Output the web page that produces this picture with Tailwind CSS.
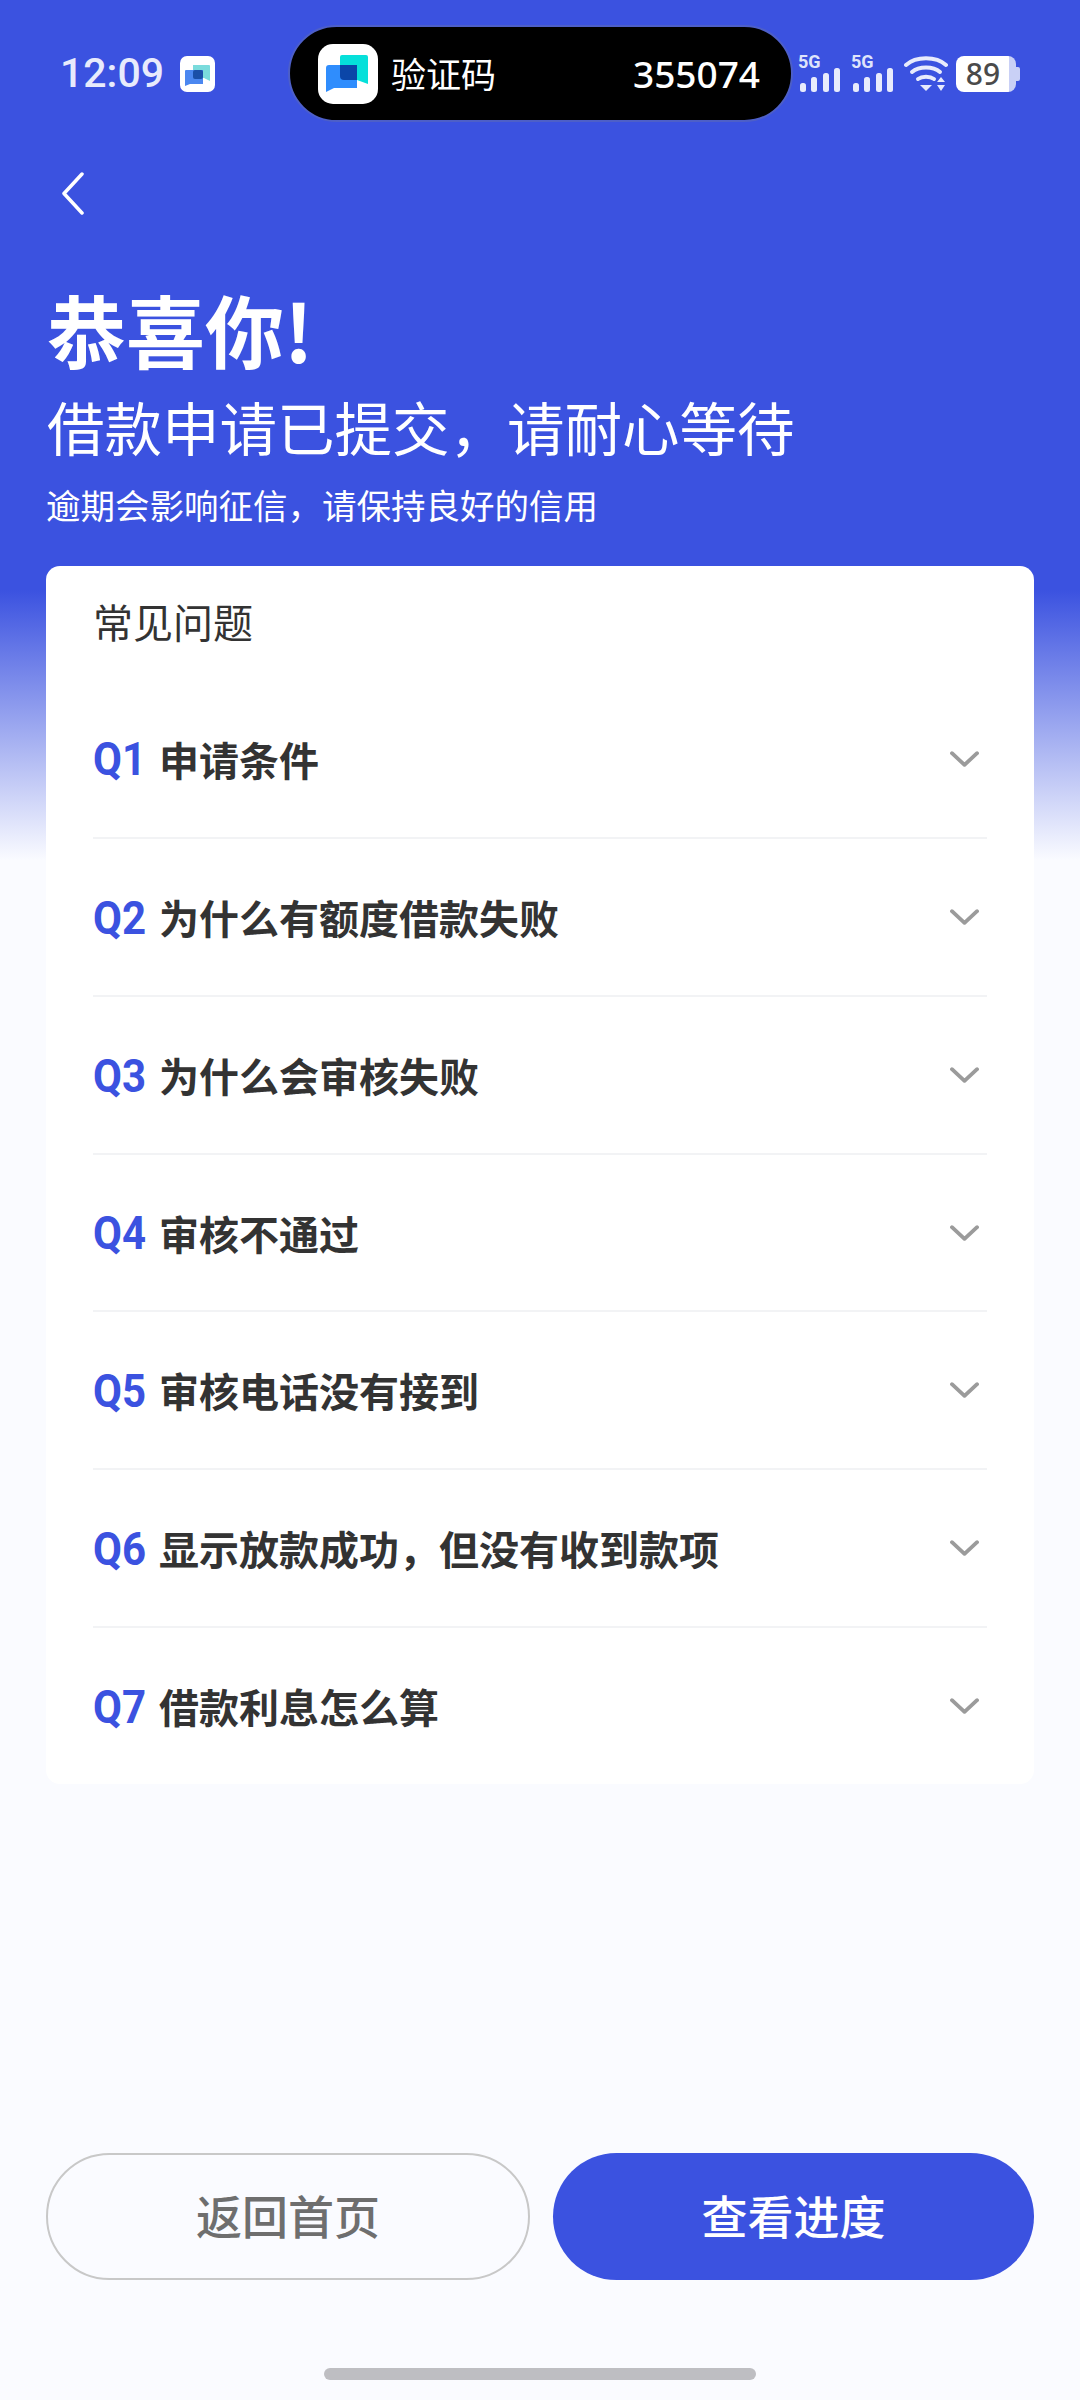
<!DOCTYPE html>
<html lang="zh-CN">
<head>
    <meta charset="UTF-8">
    <meta name="viewport" content="width=device-width, initial-scale=1.0">
    <title>恭喜你</title>
    <script src="https://cdn.jsdelivr.net/npm/@tailwindcss/browser@4"></script>
</head>
<body class="font-['Noto_Sans_CJK_SC',sans-serif]">
<div class="w-[1080px] h-[2400px] flex flex-col bg-[linear-gradient(#3b52e0_0,#3b52e0_590px,#fafbff_860px)]">

    <!-- status bar -->
    <div class="h-[146px] pt-[25px] flex items-start shrink-0">
        <div class="h-[97px] flex items-center ml-[60px] w-[228px] shrink-0">
            <span class="font-['Roboto',sans-serif] font-medium text-[41px] text-[#e8ebfc] w-[120px]">12:09</span>
            <svg class="w-[35px] h-[36px]" viewBox="0 0 35 36">
                <rect width="35" height="36" rx="7" fill="#fff"/>
                <path d="M13 9h16a1 1 0 0 1 1 1v15l-6-3H13z" fill="#7adbdc"/>
                <path d="M6 14h17v14H10l-5 2V15a1 1 0 0 1 1-1z" fill="#4b87f0"/>
                <rect x="13" y="14" width="10" height="9" rx="2" fill="#1a4fa8"/>
            </svg>
        </div>
        <div class="w-[505px] h-[97px] rounded-full bg-black border-2 border-[#4d5fc8] flex items-center shrink-0 pl-[28px] pr-[31px]">
            <svg class="w-[60px] h-[60px] shrink-0" viewBox="0 0 60 60">
                <rect width="60" height="60" rx="15" fill="#fff"/>
                <path d="M24 11h24a2 2 0 0 1 2 2v27l-11-4H22V13a2 2 0 0 1 2-2z" fill="#06e0da"/>
                <path d="M11 21h25a3 3 0 0 1 3 3v20H16l-8 4V24a3 3 0 0 1 3-3z" fill="#2f8dfd"/>
                <path d="M22 21h17v15H26a4 4 0 0 1-4-4z" fill="#0b46a8"/>
            </svg>
            <span class="text-white text-[35px] ml-[13px]">验证码</span>
            <span class="font-['Noto_Sans',sans-serif] font-medium text-white text-[37px] ml-auto">355074</span>
        </div>
        <div class="h-[97px] flex items-center ml-[5px]">
            <div class="w-[44px] h-[36px] relative shrink-0">
                <span class="absolute left-0 top-[-4px] font-['Roboto',sans-serif] font-bold text-[18px] leading-[20px] text-[#dfe4fb]">5G</span>
                <svg class="absolute left-[0px] top-0 w-[44px] h-[36px]" viewBox="0 0 44 36" fill="#e8ebfc">
                    <rect x="2" y="27" width="6" height="9" rx="2.5"/><rect x="13" y="21" width="6" height="15" rx="2.5"/><rect x="25" y="17" width="6" height="19" rx="2.5"/><rect x="36" y="12" width="6" height="24" rx="2.5"/>
                </svg>
            </div>
            <div class="w-[44px] h-[36px] relative shrink-0 ml-[9px]">
                <span class="absolute left-0 top-[-4px] font-['Roboto',sans-serif] font-bold text-[18px] leading-[20px] text-[#dfe4fb]">5G</span>
                <svg class="absolute left-[0px] top-0 w-[44px] h-[36px]" viewBox="0 0 44 36" fill="#e8ebfc">
                    <rect x="2" y="27" width="6" height="9" rx="2.5"/><rect x="13" y="21" width="6" height="15" rx="2.5"/><rect x="25" y="17" width="6" height="19" rx="2.5"/><rect x="36" y="12" width="6" height="24" rx="2.5"/>
                </svg>
            </div>
            <svg class="w-[44px] h-[36px] ml-[9px] shrink-0" viewBox="0 0 44 36" fill="none" stroke="#e8ebfc" stroke-width="4" stroke-linecap="round">
                <path d="M2 9C12 0 32 0 42 9"/>
                <path d="M8 16C15 10 29 10 36 16"/>
                <path d="M14 23C18 20 26 20 30 23"/>
                <path d="M16 29h12l-6 6z" fill="#e8ebfc" stroke="none"/>
                <path d="M33 26l4-5 4 5zM33 29l4 6 4-6z" fill="#e8ebfc" stroke="none"/>
            </svg>
            <div class="ml-[8px] w-[64px] h-[36px] flex items-center shrink-0">
                <div class="w-[60px] h-[36px] rounded-[8px] bg-[linear-gradient(90deg,#fff_0,#fff_88%,#c9d0f6_88%)] flex items-center justify-center pr-[6px] font-['Noto_Sans',sans-serif] font-medium text-[30px] text-[#4a4a4a]">89</div>
                <div class="w-[4px] h-[14px] rounded-r-[2px] bg-[#c9d0f6]"></div>
            </div>
        </div>
    </div>

    <!-- back -->
    <div class="h-[67px] pl-[61px] pt-[26px] shrink-0">
        <svg class="w-[24px] h-[43px]" viewBox="0 0 24 43" fill="none" stroke="#fff" stroke-width="3.5" stroke-linecap="round" stroke-linejoin="round">
            <path d="M21 2L3 21.5L21 41"/>
        </svg>
    </div>

    <!-- heading -->
    <div class="pl-[47px] text-white shrink-0">
        <div class="mt-[71px] h-[90px] leading-[90px] text-[79px] font-bold">恭喜你!</div>
        <div class="mt-[17px] h-[70px] leading-[70px] text-[57.5px]">借款申请已提交，请耐心等待</div>
        <div class="mt-[21px] h-[44px] leading-[44px] text-[34.5px] ml-[-1px]">逾期会影响征信，请保持良好的信用</div>
    </div>

    <!-- faq card -->
    <div class="mx-[46px] mt-[40px] bg-white rounded-[14px] h-[1218px] shrink-0 px-[47px]">
        <div class="h-[114px] pt-[25px] leading-[60px] text-[40px] text-[#333333]">常见问题</div>
        <div class="h-[1104px] flex flex-col">
            <div class="flex items-center h-[159px] border-b-2 border-[#f2f3f5]">
                <span class="inline-block scale-y-[1.12] font-['Roboto',sans-serif] font-bold text-[42px] text-[#3b52e0] w-[66px]">Q1</span>
                <span class="font-bold text-[40px] text-[#333333]">申请条件</span>
                <svg class="ml-auto mr-[8px] w-[29px] h-[18px]" viewBox="0 0 30 18" fill="none" stroke="#9b9b9b" stroke-width="4" stroke-linecap="round" stroke-linejoin="round"><path d="M2 3l13 12L28 3"/></svg>
            </div>
            <div class="flex items-center h-[158px] border-b-2 border-[#f2f3f5]">
                <span class="inline-block scale-y-[1.12] font-['Roboto',sans-serif] font-bold text-[42px] text-[#3b52e0] w-[66px]">Q2</span>
                <span class="font-bold text-[40px] text-[#333333]">为什么有额度借款失败</span>
                <svg class="ml-auto mr-[8px] w-[29px] h-[18px]" viewBox="0 0 30 18" fill="none" stroke="#9b9b9b" stroke-width="4" stroke-linecap="round" stroke-linejoin="round"><path d="M2 3l13 12L28 3"/></svg>
            </div>
            <div class="flex items-center h-[158px] border-b-2 border-[#f2f3f5]">
                <span class="inline-block scale-y-[1.12] font-['Roboto',sans-serif] font-bold text-[42px] text-[#3b52e0] w-[66px]">Q3</span>
                <span class="font-bold text-[40px] text-[#333333]">为什么会审核失败</span>
                <svg class="ml-auto mr-[8px] w-[29px] h-[18px]" viewBox="0 0 30 18" fill="none" stroke="#9b9b9b" stroke-width="4" stroke-linecap="round" stroke-linejoin="round"><path d="M2 3l13 12L28 3"/></svg>
            </div>
            <div class="flex items-center h-[157px] border-b-2 border-[#f2f3f5]">
                <span class="inline-block scale-y-[1.12] font-['Roboto',sans-serif] font-bold text-[42px] text-[#3b52e0] w-[66px]">Q4</span>
                <span class="font-bold text-[40px] text-[#333333]">审核不通过</span>
                <svg class="ml-auto mr-[8px] w-[29px] h-[18px]" viewBox="0 0 30 18" fill="none" stroke="#9b9b9b" stroke-width="4" stroke-linecap="round" stroke-linejoin="round"><path d="M2 3l13 12L28 3"/></svg>
            </div>
            <div class="flex items-center h-[158px] border-b-2 border-[#f2f3f5]">
                <span class="inline-block scale-y-[1.12] font-['Roboto',sans-serif] font-bold text-[42px] text-[#3b52e0] w-[66px]">Q5</span>
                <span class="font-bold text-[40px] text-[#333333]">审核电话没有接到</span>
                <svg class="ml-auto mr-[8px] w-[29px] h-[18px]" viewBox="0 0 30 18" fill="none" stroke="#9b9b9b" stroke-width="4" stroke-linecap="round" stroke-linejoin="round"><path d="M2 3l13 12L28 3"/></svg>
            </div>
            <div class="flex items-center h-[158px] border-b-2 border-[#f2f3f5]">
                <span class="inline-block scale-y-[1.12] font-['Roboto',sans-serif] font-bold text-[42px] text-[#3b52e0] w-[66px]">Q6</span>
                <span class="font-bold text-[40px] text-[#333333]">显示放款成功，但没有收到款项</span>
                <svg class="ml-auto mr-[8px] w-[29px] h-[18px]" viewBox="0 0 30 18" fill="none" stroke="#9b9b9b" stroke-width="4" stroke-linecap="round" stroke-linejoin="round"><path d="M2 3l13 12L28 3"/></svg>
            </div>
            <div class="flex items-center h-[156px]">
                <span class="inline-block scale-y-[1.12] font-['Roboto',sans-serif] font-bold text-[42px] text-[#3b52e0] w-[66px]">Q7</span>
                <span class="font-bold text-[40px] text-[#333333]">借款利息怎么算</span>
                <svg class="ml-auto mr-[8px] w-[29px] h-[18px]" viewBox="0 0 30 18" fill="none" stroke="#9b9b9b" stroke-width="4" stroke-linecap="round" stroke-linejoin="round"><path d="M2 3l13 12L28 3"/></svg>
            </div>
        </div>
    </div>

    <!-- buttons -->
    <div class="mt-auto mx-[46px] flex justify-between shrink-0">
        <div class="w-[484px] h-[127px] rounded-full border-2 border-[#c8c8c8] flex items-center justify-center pb-[4px] text-[46px] font-medium text-[#6e6e6e]">返回首页</div>
        <div class="w-[481px] h-[127px] rounded-full bg-[#3b52e0] flex items-center justify-center pb-[4px] text-[46px] font-medium text-white">查看进度</div>
    </div>

    <!-- home indicator -->
    <div class="mt-[88px] mb-[20px] mx-auto w-[432px] h-[12px] rounded-full bg-[#bebec2] shrink-0"></div>
</div>
</body>
</html>
